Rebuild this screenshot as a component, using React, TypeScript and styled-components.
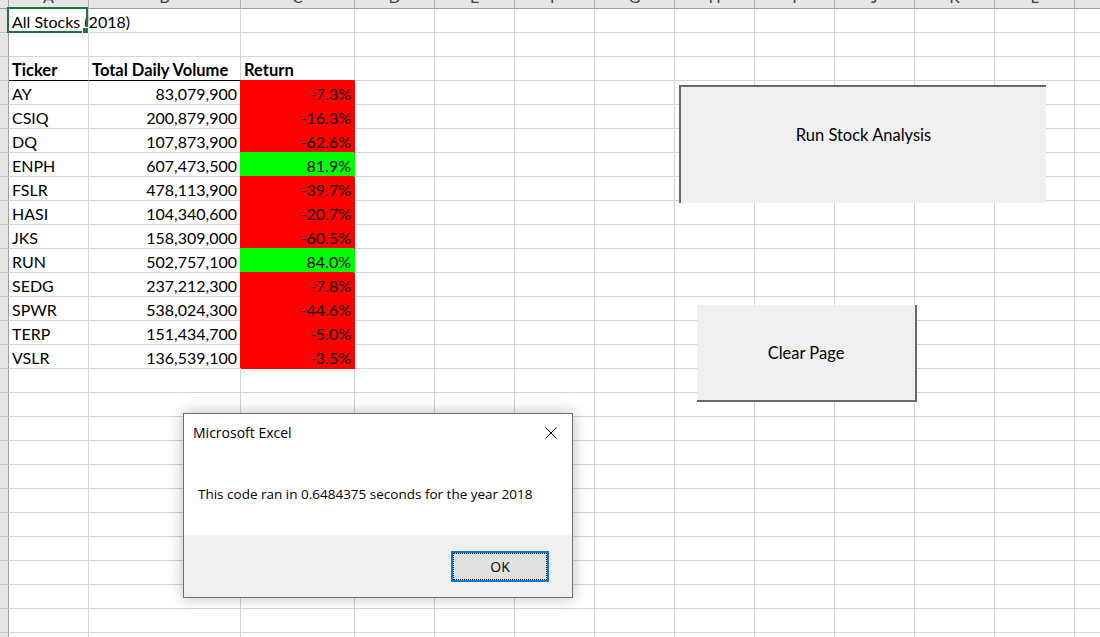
import React from 'react';
import styled, { createGlobalStyle } from 'styled-components';

const GlobalStyle = createGlobalStyle`
  html, body { margin: 0; padding: 0; background: #ffffff; overflow: hidden; }
  #root { width: 1100px; height: 637px; }
`;

const CELL_FONT = `Lato, "Liberation Sans", sans-serif`;
const UI_FONT = `"Open Sans", "Noto Sans", sans-serif`;
const GRID = '#d4d4d4';

const COLS = ['A', 'B', 'C', 'D', 'E', 'F', 'G', 'H', 'I', 'J', 'K', 'L', 'M'];
const ROW_COUNT = 27;

type Stock = { ticker: string; volume: string; ret: string; up: boolean };
const STOCKS: Stock[] = [
  { ticker: 'AY', volume: '83,079,900', ret: '-7.3%', up: false },
  { ticker: 'CSIQ', volume: '200,879,900', ret: '-16.3%', up: false },
  { ticker: 'DQ', volume: '107,873,900', ret: '-62.6%', up: false },
  { ticker: 'ENPH', volume: '607,473,500', ret: '81.9%', up: true },
  { ticker: 'FSLR', volume: '478,113,900', ret: '-39.7%', up: false },
  { ticker: 'HASI', volume: '104,340,600', ret: '-20.7%', up: false },
  { ticker: 'JKS', volume: '158,309,000', ret: '-60.5%', up: false },
  { ticker: 'RUN', volume: '502,757,100', ret: '84.0%', up: true },
  { ticker: 'SEDG', volume: '237,212,300', ret: '-7.8%', up: false },
  { ticker: 'SPWR', volume: '538,024,300', ret: '-44.6%', up: false },
  { ticker: 'TERP', volume: '151,434,700', ret: '-5.0%', up: false },
  { ticker: 'VSLR', volume: '136,539,100', ret: '-3.5%', up: false },
];

const Sheet = styled.div`
  position: relative;
  width: 1100px;
  height: 637px;
  overflow: hidden;
  background: #ffffff;
`;

const Grid = styled.div`
  display: grid;
  grid-template-columns: 9px 80px 152px 114px repeat(10, 80px);
  grid-template-rows: 9px repeat(${ROW_COUNT}, 24px);
`;

const Corner = styled.div`
  box-sizing: border-box;
  background: #e6e6e6;
  border-right: 1px solid #9e9e9e;
  border-bottom: 1px solid #9e9e9e;
`;

const ColHeader = styled.div`
  box-sizing: border-box;
  background: #e6e6e6;
  border-right: 1px solid #b4b4b4;
  border-bottom: 1px solid #9e9e9e;
  display: flex;
  align-items: flex-end;
  justify-content: center;
  overflow: hidden;
  font: 400 16px/1 ${CELL_FONT};
  color: #444444;
`;

const ColLetter = styled.span`
  margin-bottom: 3px;
`;

const RowHeader = styled.div`
  box-sizing: border-box;
  background: #e6e6e6;
  border-right: 1px solid #9e9e9e;
  border-bottom: 1px solid #c6c6c6;
`;

const Cell = styled.div<{ $align?: 'left' | 'right'; $bold?: boolean; $fill?: string; $rule?: boolean }>`
  position: relative;
  box-sizing: border-box;
  min-width: 0;
  border-right: 1px solid ${(p) => p.$fill ?? GRID};
  border-bottom: 1px solid ${(p) => p.$fill ?? (p.$rule ? '#000000' : GRID)};
  background: ${(p) => p.$fill ?? 'transparent'};
  box-shadow: ${(p) => (p.$fill ? `-1px -1px 0 0 ${p.$fill}` : 'none')};
  display: flex;
  align-items: flex-end;
  justify-content: ${(p) => (p.$align === 'right' ? 'flex-end' : 'flex-start')};
  padding: 0 3px 1px 3px;
  font: ${(p) => (p.$bold ? 700 : 400)} ${(p) => (p.$bold ? '16.5px' : '16px')}/18px ${CELL_FONT};
  color: #000000;
  white-space: nowrap;
`;

const Selection = styled.div`
  position: absolute;
  left: -2px;
  top: -2px;
  right: 0;
  bottom: -1px;
  border: 2px solid #217346;
  pointer-events: none;
`;

const FillHandle = styled.div`
  position: absolute;
  right: -3px;
  bottom: -3px;
  width: 5px;
  height: 5px;
  background: #217346;
  border: 1px solid #ffffff;
`;

const SheetButton = styled.div<{ $pressed?: boolean }>`
  position: absolute;
  box-sizing: border-box;
  background: #f0f0f0;
  display: flex;
  align-items: center;
  justify-content: center;
  font: 400 16.5px/18px ${CELL_FONT};
  color: #000000;
  ${(p) =>
    p.$pressed
      ? `border-top: 2px solid #6a6a6a; border-left: 2px solid #6a6a6a; padding-bottom: 20px;`
      : `border-right: 2px solid #6a6a6a; border-bottom: 2px solid #6a6a6a;`}
`;

const Dialog = styled.div`
  position: absolute;
  left: 183px;
  top: 413px;
  width: 390px;
  height: 185px;
  box-sizing: border-box;
  border: 1px solid #707070;
  background: #ffffff;
  box-shadow: 0 0 14px rgba(0, 0, 0, 0.28);
  display: grid;
  grid-template-rows: 40px 1fr 62px;
  font-family: ${UI_FONT};
  color: #000000;
`;

const TitleBar = styled.div`
  display: flex;
  justify-content: space-between;
  align-items: flex-start;
  padding: 10px 15px 0 9px;
  font-size: 14px;
  line-height: 18px;
`;

const CloseIcon = styled.svg`
  margin-top: 3px;
  display: block;
`;

const DialogBody = styled.div`
  padding: 31px 0 0 14px;
  font-size: 13.5px;
  line-height: 18px;
`;

const DialogFooter = styled.div`
  background: #f0f0f0;
  display: flex;
  justify-content: flex-end;
  align-items: flex-start;
  padding: 16px 23px 0 0;
`;

const OkButton = styled.button`
  width: 98px;
  height: 31px;
  box-sizing: border-box;
  border: 2px solid #0078d7;
  background: #e1e1e1;
  padding: 0;
  font: 400 14px/1 ${UI_FONT};
  color: #000000;
  outline: 1px dotted #000000;
  outline-offset: -3px;
`;

function renderCell(row: number, colIndex: number) {
  const key = `${row}-${colIndex}`;
  if (row === 1 && colIndex === 0) {
    return (
      <Cell key={key}>
        All Stocks (2018)
        <Selection>
          <FillHandle />
        </Selection>
      </Cell>
    );
  }
  if (row === 3 && colIndex < 3) {
    const labels = ['Ticker', 'Total Daily Volume', 'Return'];
    return (
      <Cell key={key} $bold $rule>
        {labels[colIndex]}
      </Cell>
    );
  }
  const stock = row >= 4 ? STOCKS[row - 4] : undefined;
  if (stock && colIndex < 3) {
    if (colIndex === 0) return <Cell key={key}>{stock.ticker}</Cell>;
    if (colIndex === 1)
      return (
        <Cell key={key} $align="right">
          {stock.volume}
        </Cell>
      );
    return (
      <Cell key={key} $align="right" $fill={stock.up ? '#00ff00' : '#ff0000'}>
        {stock.ret}
      </Cell>
    );
  }
  return <Cell key={key} />;
}

export default function App() {
  const rows = Array.from({ length: ROW_COUNT }, (_, i) => i + 1);
  return (
    <>
      <GlobalStyle />
      <Sheet>
        <Grid>
          <Corner />
          {COLS.map((c) => (
            <ColHeader key={c}>
              <ColLetter>{c}</ColLetter>
            </ColHeader>
          ))}
          {rows.map((r) => (
            <React.Fragment key={r}>
              <RowHeader />
              {COLS.map((_, ci) => renderCell(r, ci))}
            </React.Fragment>
          ))}
        </Grid>

        <SheetButton $pressed style={{ left: 679, top: 85, width: 367, height: 118 }}>
          Run Stock Analysis
        </SheetButton>
        <SheetButton style={{ left: 697, top: 305, width: 220, height: 97 }}>Clear Page</SheetButton>

        <Dialog>
          <TitleBar>
            <span>Microsoft Excel</span>
            <CloseIcon width="12" height="12" viewBox="0 0 12 12">
              <path d="M0.5 0.5 L11.5 11.5 M11.5 0.5 L0.5 11.5" stroke="#000" strokeWidth="1" fill="none" />
            </CloseIcon>
          </TitleBar>
          <DialogBody>This code ran in 0.6484375 seconds for the year 2018</DialogBody>
          <DialogFooter>
            <OkButton>OK</OkButton>
          </DialogFooter>
        </Dialog>
      </Sheet>
    </>
  );
}
